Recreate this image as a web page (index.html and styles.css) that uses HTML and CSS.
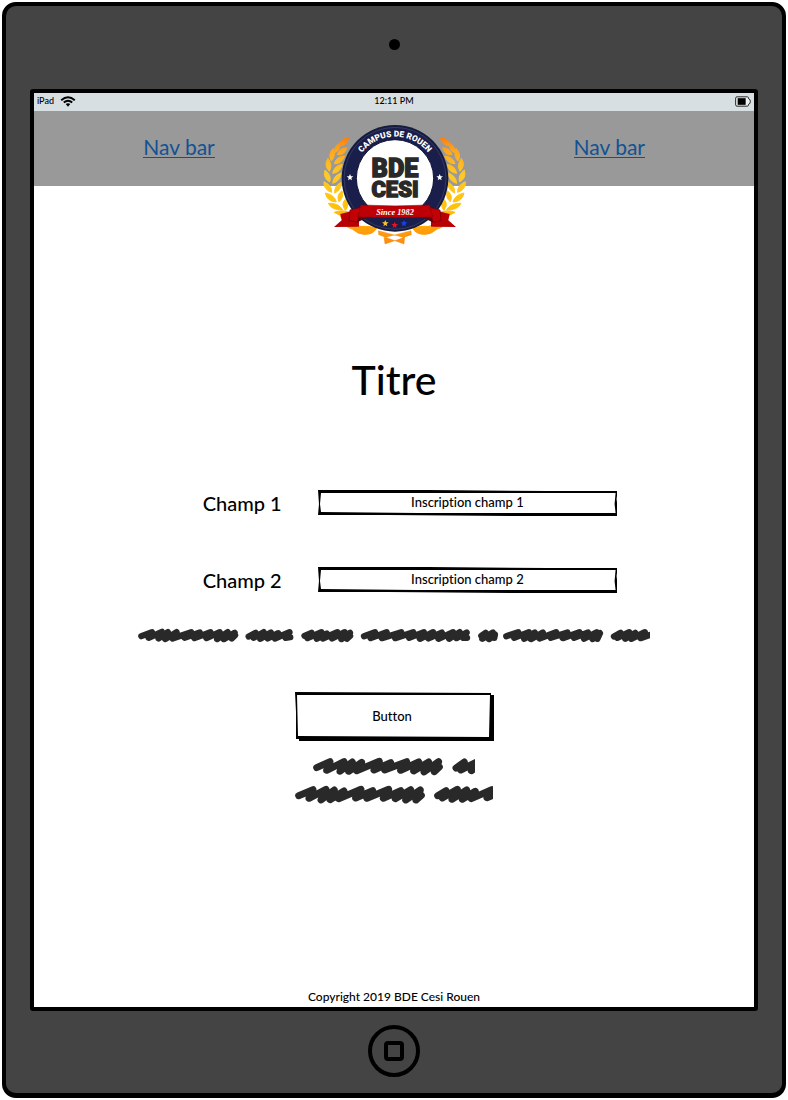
FILE: index.html
```html
<!DOCTYPE html>
<html lang="fr">
<head>
<meta charset="utf-8">
<meta name="viewport" content="width=device-width, initial-scale=1">
<title>BDE Cesi Rouen</title>
<link rel="stylesheet" href="styles.css">
</head>
<body>
<div class="device">
  <div class="bezel bezel-top"><span class="camera"></span></div>
  <div class="screen">
    <div class="status">
      <span class="carrier">iPad
        <svg class="wifi" viewBox="0 0 48 34" aria-hidden="true"><path d="M3 13Q24-5 45 13M11 20Q24 9 37 20" fill="none" stroke="#000" stroke-width="6"/><path d="M17 25Q24 20 31 25L24 33Z"/></svg>
      </span>
      <span class="clock">12:11 PM</span>
      <svg class="battery" viewBox="0 0 48 32" aria-hidden="true"><path d="M6 2H37Q41 2 41 8Q46 9 46 16Q46 23 41 24Q41 30 37 30H6Q2 30 2 26V6Q2 2 6 2Z" fill="#eef2f3" stroke="#222" stroke-width="3"/><path d="M8 6H32V26H8Z"/></svg>
    </div>
    <header class="navbar">
      <a href="#" class="nav-link">Nav bar</a>
      <a href="#" class="nav-link">Nav bar</a>
      <svg class="logo" viewBox="0 0 480 420" role="img" aria-label="BDE Cesi, campus de Rouen">
        <defs>
          <linearGradient id="gold" x1="0" y1="80" x2="0" y2="405" gradientUnits="userSpaceOnUse"><stop offset="0" stop-color="#ff7a0a"/><stop offset=".12" stop-color="#ffa51a"/><stop offset=".35" stop-color="#ffc928"/><stop offset=".65" stop-color="#ffc20a"/><stop offset="1" stop-color="#ff8a08"/></linearGradient>
          <path id="star" d="M0-10L3-3L10-3L4 2L6 9L0 5L-6 9L-4 2L-10-3L-3-3Z"/>
          <path id="arc" d="M117 206A126 126 0 0 1 369 206"/>
          <g id="laurel">
            <path d="M106 82Q75 88 76 108Q96 108 106 82Z"/>
            <path d="M77 98Q58 110 63 128Q80 120 77 98Z"/>
            <path d="M98 113Q75 114 70 134Q91 138 98 113Z"/>
            <path d="M58 115Q40 133 52 153Q67 138 58 115Z"/>
            <path d="M92 138Q66 140 61 161Q83 162 92 138Z"/>
            <path d="M42 145Q28 166 46 184Q57 166 42 145Z"/>
            <path d="M85 163Q61 166 56 190Q79 188 85 163Z"/>
            <path d="M33 180Q26 204 47 216Q54 196 33 180Z"/>
            <path d="M82 189Q58 196 56 220Q78 214 82 189Z"/>
            <path d="M30 215Q28 239 53 247Q56 227 30 215Z"/>
            <path d="M82 217Q60 227 62 249Q83 240 82 217Z"/>
            <path d="M34 249Q38 274 67 276Q61 254 34 249Z"/>
            <path d="M84 242Q66 255 75 275Q91 262 84 242Z"/>
            <path d="M43 280Q54 302 86 299Q72 278 43 280Z"/>
            <path d="M94 268Q80 282 94 301Q108 286 94 268Z"/>
            <path d="M61 307Q83 323 115 311Q88 296 61 307Z"/>
            <path d="M116 358Q145 342 188 354Q178 374 150 373Q133 373 116 358Z"/>
            <path d="M92 343Q115 338 136 356Q106 362 92 343Z"/>
            <path d="M78 315Q90 340 160 354" fill="none" stroke="url(#gold)" stroke-width="4"/>
          </g>
        </defs>
        <g fill="url(#gold)" stroke="url(#gold)" stroke-width="3" stroke-linejoin="round">
          <use href="#laurel"/>
          <use href="#laurel" transform="matrix(-1 0 0 1 484 0)"/>
          <path d="M193 362L272 383L270 402L245 393L194 374ZM291 362L210 383L213 402L240 393L292 374Z" stroke="#e07a08" stroke-width="1"/>
        </g>
        <circle cx="243" cy="205" r="160" fill="#151b3e"/>
        <circle cx="243" cy="205" r="153" fill="#191e4b" stroke="#72799b" stroke-width="1"/>
        <circle cx="243" cy="205" r="116" fill="#fff" stroke="#101438" stroke-width="3"/>
        <text class="logo-arc"><textPath href="#arc" startOffset="50%" text-anchor="middle">CAMPUS DE ROUEN</textPath></text>
        <text class="logo-name logo-bde" x="243" y="200" text-anchor="middle">BDE</text>
        <text class="logo-name logo-cesi" x="243" y="262" text-anchor="middle">CESI</text>
        <g fill="#fff"><use href="#star" x="108" y="202"/><use href="#star" x="377" y="202"/></g>
        <path d="M79 312L135 298V350L60 351L83 331ZM407 312L351 298V350L426 351L403 331Z" fill="#b80005"/>
        <path d="M108 300L140 292V322L128 336L105 332ZM378 300L346 292V322L358 336L381 332Z" fill="#c30006" stroke="#63000a" stroke-width="2"/>
        <path d="M132 322H160L128 338ZM354 322H326L358 338Z" fill="#5c0710"/>
        <path d="M140 285Q243 291 347 285L356 321Q243 325 132 321Z" fill="#be0006" stroke="#850008" stroke-width="2"/>
        <text class="logo-since" x="243" y="314" text-anchor="middle">Since 1982</text>
        <use href="#star" x="214" y="340" fill="#f5c52d"/>
        <use href="#star" x="242" y="345" fill="#e21622"/>
        <use href="#star" x="270" y="340" fill="#1746e8"/>
      </svg>
    </header>
    <main class="content">
      <h1 class="title">Titre</h1>
      <form class="form">
        <div class="row">
          <label class="label" for="champ1">Champ 1</label>
          <div class="field">
            <svg class="sketch" viewBox="0 0 300 26" preserveAspectRatio="none" aria-hidden="true"><path d="M0 0L110 0L230 1L300 1L299 9L300 18L300 26L200 26L70 25L0 25L1 14Z M3 3L2 14L3 22L100 23L298 23L297 14L298 3L150 3L80 3Z" fill-rule="evenodd"/></svg>
            <input class="input" id="champ1" type="text" value="Inscription champ 1">
          </div>
        </div>
        <div class="row">
          <label class="label" for="champ2">Champ 2</label>
          <div class="field">
            <svg class="sketch" viewBox="0 0 300 26" preserveAspectRatio="none" aria-hidden="true"><path d="M0 0L110 0L230 1L300 1L299 9L300 18L300 26L200 26L70 25L0 25L1 14Z M3 3L2 14L3 22L100 23L298 23L297 14L298 3L150 3L80 3Z" fill-rule="evenodd"/></svg>
            <input class="input" id="champ2" type="text" value="Inscription champ 2">
          </div>
        </div>
        <svg class="scribble scribble-wide" viewBox="22 25 1538 44" aria-hidden="true">
          <g fill="none" stroke="#292929" stroke-width="19" stroke-linecap="round" stroke-linejoin="round">
            <path d="M32 49L64 37L54 54L94 36L84 56L112 37L104 58L138 37L126 56L182 37L162 54L208 38L192 55L240 37L228 55L268 37L260 58L292 37L280 58L313 39L304 56L314 46"/>
            <path d="M355 50L376 39L370 54L400 37L390 57L422 38L412 56L444 40L434 56L478 37L466 54L480 52"/>
            <path d="M523 48L544 39L532 55L574 37L560 57L590 41L578 56L622 37L606 56L644 37L634 58L660 39L650 57L660 48"/>
            <path d="M702 49L735 37L722 55L770 37L756 55L814 37L796 55L850 37L838 54L882 37L870 57L910 37L896 56L936 38L926 57L970 37L958 57L990 37L980 55L1011 38L1000 54L1012 54"/>
            <path d="M1055 48L1068 39L1058 57L1090 38L1078 58L1096 44L1094 54"/>
            <path d="M1130 49L1166 37L1154 54L1198 37L1184 57L1216 38L1204 58L1240 38L1230 56L1280 37L1264 54L1314 38L1300 55L1350 37L1334 54L1376 38L1364 57L1402 37L1390 58L1412 40L1404 57"/>
            <path d="M1454 50L1474 39L1464 54L1500 37L1488 57L1518 39L1506 57L1547 37L1534 55L1564 45"/>
          </g>
        </svg>
        <div class="button-wrap">
          <svg class="sketch" viewBox="0 0 199 49" preserveAspectRatio="none" aria-hidden="true"><path d="M0 0L196 1V3L199 3V49H4V47H1L1 20Z M2 3L3 44L194 45L195 3Z" fill-rule="evenodd"/></svg>
          <button class="button" type="button">Button</button>
        </div>
        <svg class="scribble scribble-first" viewBox="87 216 486 60" aria-hidden="true">
          <path d="M98 248L138 230L128 256L180 230L168 259L205 231L194 259L233 232L218 257L286 229L270 255L320 233L302 255L368 230L350 256L404 231L389 258L434 231L420 261L464 230L451 260L466 246M516 249L541 231L530 255L576 232L562 257L590 240" fill="none" stroke="#292929" stroke-width="21" stroke-linecap="round" stroke-linejoin="round"/>
        </svg>
        <svg class="scribble scribble-second" viewBox="33 300 594 60" aria-hidden="true">
          <path d="M44 332L87 314L75 340L126 313L111 345L151 315L138 344L180 318L164 341L231 313L215 339L266 317L249 340L314 313L298 340L350 317L334 341L380 314L365 345L409 315L396 345L412 331M461 332L486 317L475 339L520 313L504 343L548 315L535 343L574 319L562 341L623 314L609 338L640 325" fill="none" stroke="#292929" stroke-width="21" stroke-linecap="round" stroke-linejoin="round"/>
        </svg>
      </form>
      <footer class="footer">Copyright 2019 BDE Cesi Rouen</footer>
    </main>
  </div>
  <div class="bezel bezel-bottom"><button class="home" type="button" aria-label="Accueil"><span class="home-mark"></span></button></div>
</div>
</body>
</html>
```

FILE: styles.css
```css
* { box-sizing: border-box; }

body {
  margin: 0;
  padding: 2px;
  min-height: 100vh;
  display: flex;
  background: #fff;
  color: #000;
  font-family: Lato, "Open Sans", sans-serif;
  font-size: 13px;
  font-weight: 500;
  font-variant-ligatures: none;
  line-height: 16px;
}

.device {
  flex: 1;
  display: flex;
  flex-direction: column;
  padding: 0 24px;
  border: 4px solid #000;
  border-bottom-width: 5px;
  border-radius: 14px;
  background: #444;
}

.bezel { display: flex; align-items: center; justify-content: center; }
.bezel-top { height: 83px; padding-bottom: 6px; }
.bezel-bottom { height: 82px; padding-bottom: 2px; }

.camera { width: 11px; height: 11px; border-radius: 50%; background: #000; }

.home {
  display: flex;
  align-items: center;
  justify-content: center;
  width: 52px;
  height: 52px;
  padding: 0;
  border: 4px solid #000;
  border-radius: 50%;
  background: none;
}

.home-mark { width: 20px; height: 20px; border: 4px solid #000; border-radius: 4px; }

.screen {
  flex: 1;
  display: flex;
  flex-direction: column;
  border: 4px solid #000;
  border-radius: 3px;
  background: #fff;
}

.status {
  display: grid;
  grid-template-columns: 1fr auto 1fr;
  align-items: center;
  height: 18px;
  padding: 0 3px 2px;
  background: #d7dfe2;
  font-size: 9px;
}

.carrier { display: flex; align-items: center; gap: 6px; }
.wifi { width: 16px; height: 11px; }
.battery { width: 16px; height: 11px; justify-self: end; }

.navbar {
  position: relative;
  display: grid;
  grid-template-columns: 290fr 430fr;
  align-items: center;
  height: 75px;
  padding-bottom: 3px;
  background: #999;
}

.nav-link {
  justify-self: center;
  border-bottom: 1px solid #125293;
  color: #125293;
  font-size: 21px;
  font-weight: 400;
  line-height: 21px;
  text-decoration: none;
}

.nav-link + .nav-link { justify-self: end; margin-right: 109px; }

.logo {
  position: absolute;
  top: -1px;
  left: calc(50% - 80px);
  width: 160px;
  height: 140px;
}

.logo-arc { fill: #fff; font: 900 25px Roboto, sans-serif; }
.logo-name {
  fill: #292929;
  stroke: #292929;
  stroke-width: 4px;
  font-family: Roboto, sans-serif;
  font-weight: 900;
}
.logo-bde { font-size: 76px; }
.logo-cesi { font-size: 66px; }
.logo-since { fill: #fff; font: italic bold 25px "Liberation Serif", serif; }

.content {
  flex: 1;
  display: flex;
  flex-direction: column;
  align-items: center;
  padding-top: 170px;
}

.title { margin: 0; font-size: 41px; font-weight: 500; line-height: 48px; }

.form {
  display: flex;
  flex-direction: column;
  align-items: center;
  width: 100%;
  padding-top: 86px;
}

.row {
  display: grid;
  grid-template-columns: 248fr 300fr;
  column-gap: 36px;
  align-items: center;
  width: 100%;
  margin-bottom: 51px;
  padding-right: 19%;
}

.row + .row { margin-bottom: 35px; }

.label { justify-self: end; font-size: 20px; line-height: 24px; }

.field, .button-wrap { position: relative; display: flex; }

.sketch {
  position: absolute;
  inset: 0;
  width: 100%;
  height: 100%;
  pointer-events: none;
}

.input {
  width: 100%;
  height: 26px;
  padding: 0 4px 2px;
  border: 0;
  background: none;
  color: #000;
  font: inherit;
  text-align: center;
}

.scribble { display: block; }
.scribble-wide { width: 71%; height: 15px; margin-bottom: 49px; }
.scribble-first { width: 162px; height: 20px; margin-bottom: 8px; }
.scribble-second { width: 198px; height: 20px; }

.button-wrap { margin-bottom: 16px; }

.button {
  width: 199px;
  height: 49px;
  padding: 0 4px 2px 0;
  border: 0;
  background: none;
  color: #000;
  font: inherit;
}

.footer { margin-top: auto; padding-bottom: 2px; font-size: 12px; }
```
